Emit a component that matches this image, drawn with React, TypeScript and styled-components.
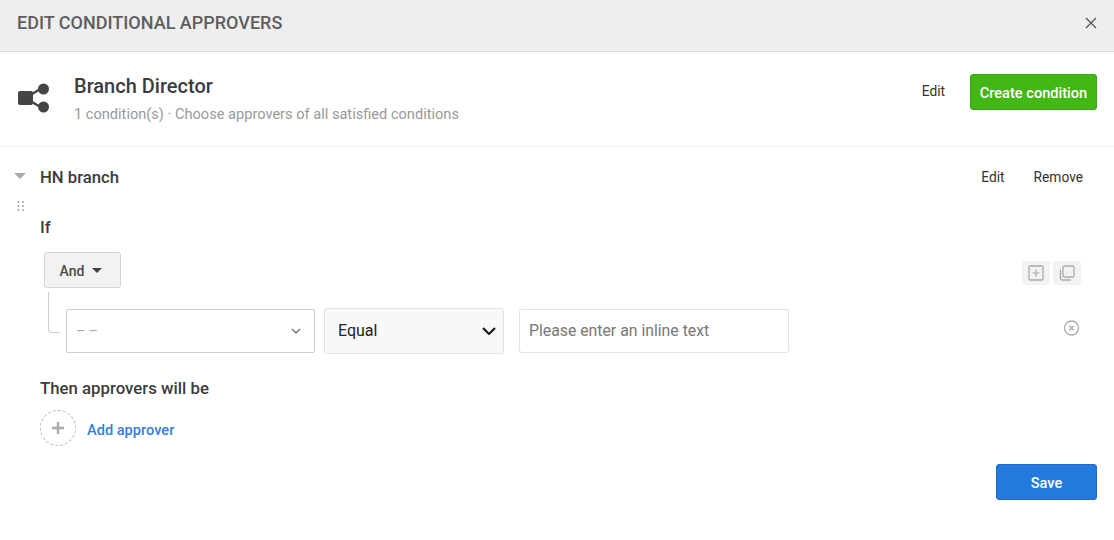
import React from "react";
import styled, { createGlobalStyle } from "styled-components";

const GlobalStyle = createGlobalStyle`
  html, body {
    margin: 0;
    padding: 0;
    background: #fff;
    font-family: Roboto, "Liberation Sans", sans-serif;
    color: #333;
  }
  * { box-sizing: border-box; }
`;

const chevron = `url("data:image/svg+xml,%3Csvg xmlns='http://www.w3.org/2000/svg' width='14' height='8' viewBox='0 0 14 8'%3E%3Cpath d='M1 1l6 6 6-6' stroke='%23111' stroke-width='2' fill='none'/%3E%3C/svg%3E")`;

const Modal = styled.div`
  width: 1114px;
  height: 540px;
  overflow: hidden;
  background: #fff;
`;

const Header = styled.div`
  height: 52px;
  display: flex;
  align-items: center;
  justify-content: space-between;
  padding: 0 16px 6px 17px;
  background: #eee;
  border-bottom: 1px solid #d9d9d9;
`;

const HeaderTitle = styled.h2`
  margin: 0;
  font-size: 18px;
  font-weight: 500;
  color: #5e5e5e;
`;

const CloseButton = styled.button`
  display: flex;
  padding: 0;
  border: none;
  background: none;
  color: #555;
`;

const Summary = styled.div`
  height: 95px;
  display: flex;
  align-items: flex-start;
  padding: 22px 17px 0 18px;
  border-bottom: 1px solid #eee;
`;

const SummaryIcon = styled.svg`
  width: 32px;
  height: 30px;
  margin: 9px 24px 0 0;
  flex: none;
`;

const SummaryText = styled.div`
  flex: 1;
`;

const SummaryTitle = styled.div`
  font-size: 20px;
  line-height: 24px;
  font-weight: 500;
  color: #3c3c3c;
`;

const SummarySub = styled.div`
  margin-top: 6px;
  font-size: 14.6px;
  line-height: 20px;
  color: #999;
`;

const TextButton = styled.button<{ $gap?: number }>`
  padding: 0;
  margin-right: ${(p) => p.$gap ?? 0}px;
  border: none;
  background: none;
  font: 400 13.75px/20px Roboto, sans-serif;
  color: #333;
`;

const EditTop = styled(TextButton)`
  margin-top: 7px;
`;

const CreateButton = styled.button`
  width: 127px;
  height: 36px;
  padding: 2px 0 0;
  border: 1px solid #3aa814;
  border-radius: 3px;
  background: #42b814;
  color: #fff;
  font: 500 14.6px/20px Roboto, sans-serif;
`;

const Body = styled.div`
  padding: 20px 17px 0 14px;
`;

const ConditionHead = styled.div`
  display: flex;
  align-items: center;
  height: 20px;
  padding-right: 14px;
`;

const Caret = styled.span`
  width: 0;
  height: 0;
  margin: 0 14px 2px 0;
  border-left: 6px solid transparent;
  border-right: 6px solid transparent;
  border-top: 6px solid #aaa;
`;

const ConditionName = styled.div`
  flex: 1;
  font-size: 16.7px;
  font-weight: 500;
  color: #3c3c3c;
`;

const DragHandle = styled.svg`
  display: block;
  width: 8px;
  height: 12px;
  margin: 13px 0 0 3px;
`;

const Indented = styled.div`
  padding-left: 26px;
`;

const SectionLabel = styled.div<{ $top: number }>`
  margin-top: ${(p) => p.$top}px;
  font-size: 16.8px;
  line-height: 20px;
  font-weight: 500;
  color: #3c3c3c;
`;

const GroupRow = styled.div`
  display: flex;
  align-items: flex-start;
  justify-content: space-between;
  margin-top: 15px;
  padding-left: 4px;
`;

const AndButton = styled.button`
  width: 77px;
  height: 36px;
  display: flex;
  align-items: center;
  justify-content: center;
  gap: 8px;
  padding: 2px 3px 0 0;
  border: 1px solid #d4d4d4;
  border-radius: 3px;
  background: #f2f2f2;
  color: #4a4a4a;
  font: 500 14px/20px Roboto, sans-serif;
`;

const AndCaret = styled.span`
  width: 0;
  height: 0;
  margin-top: -1px;
  border-left: 5px solid transparent;
  border-right: 5px solid transparent;
  border-top: 5px solid #444;
`;

const Tools = styled.div`
  display: flex;
  gap: 3px;
  margin: 9px 16px 0 0;
`;

const ToolButton = styled.button`
  width: 28px;
  height: 24px;
  display: flex;
  align-items: center;
  justify-content: center;
  padding: 0;
  border: none;
  border-radius: 3px;
  background: #f2f2f2;
`;

const RuleRow = styled.div`
  display: flex;
  align-items: flex-start;
  margin-top: 4px;
  padding-left: 8px;
`;

const Connector = styled.div`
  width: 12px;
  height: 41px;
  margin-right: 6px;
  border-left: 1px solid #ccc;
  border-bottom: 1px solid #ccc;
  border-bottom-left-radius: 4px;
`;

const FieldSelect = styled.div`
  width: 249px;
  height: 44px;
  margin: 17px 9px 0 0;
  display: flex;
  align-items: center;
  justify-content: space-between;
  padding: 0 13px 0 9px;
  border: 1px solid #ccc;
  border-radius: 2px;
  color: #aaa;
  font-size: 14px;
`;

const OperatorSelect = styled.select`
  width: 180px;
  height: 46px;
  margin: 16px 15px 0 0;
  padding: 0 6px 2px 13px;
  appearance: none;
  border: 1px solid #e2e2e2;
  border-radius: 3px;
  background: #f8f8f8 ${chevron} no-repeat right 7px center;
  color: #222;
  font: 400 16px Roboto, sans-serif;
`;

const ValueInput = styled.input`
  width: 270px;
  height: 44px;
  margin-top: 17px;
  padding: 0 0 2px 9px;
  border: 1px solid #e2e2e2;
  border-radius: 3px;
  outline: none;
  font: 400 15.8px Roboto, sans-serif;
  color: #333;

  &::placeholder {
    color: #777;
    opacity: 1;
  }
`;

const RemoveRule = styled.svg`
  width: 16px;
  height: 16px;
  margin: 28px 0 0 274px;
  flex: none;
`;

const ApproverRow = styled.div`
  display: flex;
  align-items: center;
  gap: 11px;
  margin-top: 12px;
`;

const AddCircle = styled.button`
  width: 36px;
  height: 36px;
  display: flex;
  align-items: center;
  justify-content: center;
  padding: 0;
  border: 1px dashed #bbb;
  border-radius: 50%;
  background: #fff;
`;

const AddLabel = styled.a`
  margin-top: 3px;
  font-size: 14.6px;
  font-weight: 500;
  color: #2f80e0;
`;

const Footer = styled.div`
  display: flex;
  justify-content: flex-end;
  margin-top: 18px;
`;

const SaveButton = styled.button`
  width: 101px;
  height: 36px;
  padding: 2px 0 0;
  border: 1px solid #2069c4;
  border-radius: 3px;
  background: #2479de;
  color: #fff;
  font: 500 14.6px/20px Roboto, sans-serif;
`;

const dots = [2, 6, 10].flatMap((cy) => [1.5, 6].map((cx) => ({ cx, cy })));

export default function App() {
  return (
    <Modal>
      <GlobalStyle />
      <Header>
        <HeaderTitle>EDIT CONDITIONAL APPROVERS</HeaderTitle>
        <CloseButton aria-label="Close">
          <svg width="14" height="14" viewBox="0 0 14 14">
            <path d="M2 2l10 10M12 2L2 12" stroke="currentColor" strokeWidth="1.3" fill="none" />
          </svg>
        </CloseButton>
      </Header>

      <Summary>
        <SummaryIcon viewBox="0 0 32 30">
          <path d="M14 11L24 5M14 19l10 6" stroke="#444" strokeWidth="2.4" fill="none" />
          <rect x="0" y="8" width="15" height="14" rx="2" fill="#444" />
          <circle cx="25.5" cy="6" r="5.5" fill="#444" />
          <circle cx="25.5" cy="24" r="5.5" fill="#444" />
        </SummaryIcon>
        <SummaryText>
          <SummaryTitle>Branch Director</SummaryTitle>
          <SummarySub>1 condition(s) · Choose approvers of all satisfied conditions</SummarySub>
        </SummaryText>
        <EditTop $gap={25}>Edit</EditTop>
        <CreateButton>Create condition</CreateButton>
      </Summary>

      <Body>
        <ConditionHead>
          <Caret />
          <ConditionName>HN branch</ConditionName>
          <TextButton $gap={29}>Edit</TextButton>
          <TextButton>Remove</TextButton>
        </ConditionHead>
        <DragHandle viewBox="0 0 8 12">
          {dots.map((d) => (
            <circle key={`${d.cx}-${d.cy}`} cx={d.cx} cy={d.cy} r="0.9" fill="#999" />
          ))}
        </DragHandle>
        <Indented>
          <SectionLabel $top={5}>If</SectionLabel>
          <GroupRow>
            <AndButton>
              And
              <AndCaret />
            </AndButton>
            <Tools>
              <ToolButton aria-label="Add rule">
                <svg width="16" height="16" viewBox="0 0 16 16" fill="none" stroke="#aaa">
                  <rect x="1" y="1" width="14" height="14" rx="1" strokeWidth="1.3" />
                  <path d="M8 4.5v7M4.5 8h7" strokeWidth="1.2" />
                </svg>
              </ToolButton>
              <ToolButton aria-label="Copy rule">
                <svg width="16" height="16" viewBox="0 0 16 16" fill="none" stroke="#aaa" strokeWidth="1.3">
                  <rect x="4" y="1" width="11" height="11" rx="1.5" />
                  <path d="M1.5 4.5v9a1.5 1.5 0 0 0 1.5 1.5h9" />
                </svg>
              </ToolButton>
            </Tools>
          </GroupRow>
          <RuleRow>
            <Connector />
            <FieldSelect>
              <span>– –</span>
              <svg width="10" height="6" viewBox="0 0 10 6">
                <path d="M1 1l4 4 4-4" stroke="#666" strokeWidth="1.2" fill="none" />
              </svg>
            </FieldSelect>
            <OperatorSelect defaultValue="Equal">
              <option>Equal</option>
              <option>Not equal</option>
            </OperatorSelect>
            <ValueInput placeholder="Please enter an inline text" />
            <RemoveRule viewBox="0 0 16 16" fill="none" stroke="#aaa">
              <circle cx="8.5" cy="8" r="7" strokeWidth="1.3" />
              <path d="M6.2 5.7l4.6 4.6M10.8 5.7l-4.6 4.6" strokeWidth="1.3" />
            </RemoveRule>
          </RuleRow>
          <SectionLabel $top={24}>Then approvers will be</SectionLabel>
          <ApproverRow>
            <AddCircle aria-label="Add approver">
              <svg width="12" height="12" viewBox="0 0 12 12">
                <path d="M6 0v12M0 6h12" stroke="#aaa" strokeWidth="2.4" />
              </svg>
            </AddCircle>
            <AddLabel>Add approver</AddLabel>
          </ApproverRow>
        </Indented>
        <Footer>
          <SaveButton>Save</SaveButton>
        </Footer>
      </Body>
    </Modal>
  );
}
